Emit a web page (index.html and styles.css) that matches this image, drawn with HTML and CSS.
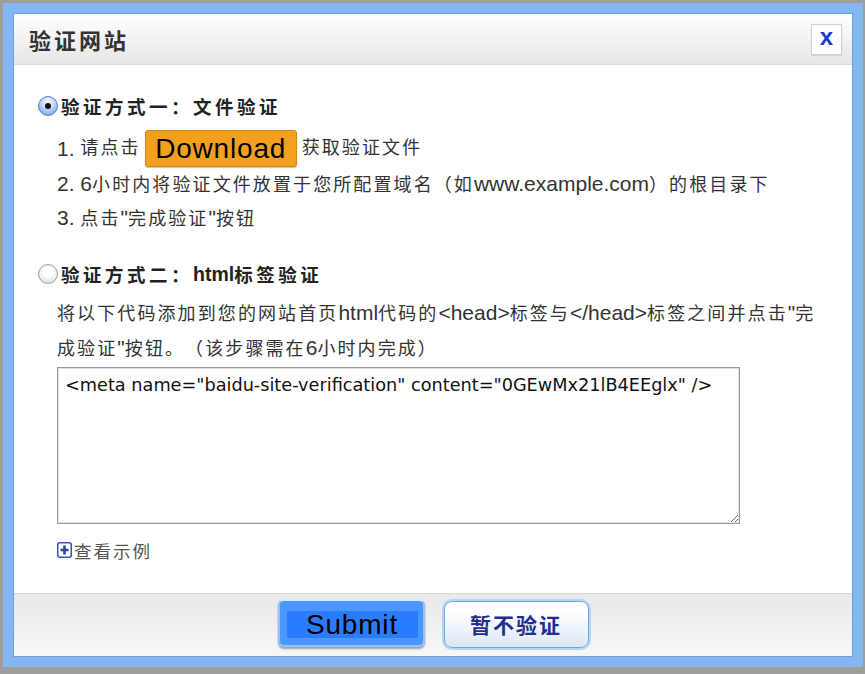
FILE: index.html
```html
<!DOCTYPE html>
<html lang="zh-CN">
<head>
  <meta charset="UTF-8">
  <title>验证网站</title>
  <link rel="stylesheet" href="styles.css">
</head>
<body>
  <div class="frame">
    <div class="dialog">
      <div class="header">
        <h1 class="title">验证网站</h1>
        <a class="close" href="#">x</a>
      </div>

      <div class="content">
        <div class="method"><span class="radio checked"></span>验证方式一：文件验证</div>
        <div class="steps">
          <div class="step first"><span class="en">1.&nbsp;</span>请点击<a class="download" href="#">Download</a>获取验证文件</div>
          <div class="step"><span class="en">2. 6</span>小时内将验证文件放置于您所配置域名（如<span class="en">www.example.com</span>）的根目录下</div>
          <div class="step"><span class="en">3. </span>点击<span class="en">"</span>完成验证<span class="en">"</span>按钮</div>
        </div>

        <div class="method second"><span class="radio"></span>验证方式二：<span class="en">html</span>标签验证</div>
        <p class="desc">将以下代码添加到您的网站首页<span class="en">html</span>代码的<span class="en">&lt;head&gt;</span>标签与<span class="en">&lt;/head&gt;</span>标签之间并点击<span class="en">"</span>完<br>成验证<span class="en">"</span>按钮。（该步骤需在<span class="en">6</span>小时内完成）</p>
        <textarea class="code" spellcheck="false">&lt;meta name="baidu-site-verification" content="0GEwMx21lB4EEglx" /&gt;</textarea>
        <a class="example" href="#">
          <svg width="15" height="16" viewBox="0 0 15 16">
            <rect x="0.75" y="0.75" width="13.5" height="14.5" rx="2" fill="#fff" stroke="#3550c4" stroke-width="1.5"/>
            <path d="M7.5 3.5v9M3.5 8h8" stroke="#2a3fb8" stroke-width="2.6"/>
          </svg>查看示例
        </a>
      </div>

      <div class="footer">
        <button class="btn-submit"><span>Submit</span></button>
        <button class="btn-cancel">暂不验证</button>
      </div>
    </div>
  </div>
</body>
</html>
```

FILE: styles.css
```css
html, body {
  margin: 0;
  padding: 0;
}
body {
  width: 865px;
  height: 674px;
  overflow: hidden;
  background: #9d9d9d;
  font-family: "Liberation Sans", "Noto Sans CJK SC", sans-serif;
  color: #333;
  text-spacing-trim: space-all;
}
.frame {
  margin: 3px 0 0 3px;
  width: 860px;
  height: 664px;
  box-sizing: border-box;
  padding: 10px;
  background: #84b6f0;
}
.dialog {
  height: 100%;
  box-sizing: border-box;
  border: 1px solid #6c9fe0;
  background: #fff;
  display: flex;
  flex-direction: column;
}
.header {
  height: 51px;
  box-sizing: border-box;
  border-bottom: 1px solid #dcdcdc;
  background: linear-gradient(to bottom, #fff, #e6e6e6);
  display: flex;
  align-items: center;
  justify-content: space-between;
  padding: 0 10px 0 15px;
}
.title {
  margin: 0;
  font-size: 22px;
  letter-spacing: 3px;
  color: #333;
  font-weight: bold;
}
.close {
  width: 31px;
  height: 31px;
  box-sizing: border-box;
  border: 1px solid #cfcfcf;
  background: #fff;
  box-shadow: 0 1px 1px rgba(0,0,0,0.08);
  color: #1d3cc6;
  font: bold 24px/24px "Liberation Sans", sans-serif;
  text-align: center;
  text-decoration: none;
  margin-top: 1px;
}
.content {
  flex: 1;
  padding: 31px 0 0 24px;
  font-size: 18px;
  letter-spacing: 2.1px;
}
.en {
  font-size: 21px;
  letter-spacing: 0;
}
.method {
  display: flex;
  align-items: center;
  height: 20px;
  font-weight: bold;
  font-size: 18.5px;
  letter-spacing: 3.5px;
  color: #222;
}
.method .en {
  font-size: 19.5px;
}
.method.second {
  margin-top: 29px;
}
.radio {
  width: 20px;
  height: 20px;
  box-sizing: border-box;
  border-radius: 50%;
  border: 1px solid #9c9c9c;
  background: radial-gradient(circle at 50% 35%, #fff 30%, #d6d6d6 100%);
  margin-right: 3px;
  display: flex;
  align-items: center;
  justify-content: center;
  flex-shrink: 0;
}
.radio.checked {
  border-color: #5a7fbd;
  background: radial-gradient(circle at 50% 30%, #f2f7ff 10%, #a9c9f5 55%, #6a98dc 100%);
}
.radio.checked::after {
  content: "";
  width: 6px;
  height: 6px;
  border-radius: 50%;
  background: #111;
}
.steps {
  margin: 14px 0 0 19px;
}
.step {
  height: 34px;
  line-height: 34px;
}
.step.first {
  height: 37px;
  line-height: 37px;
  display: flex;
  align-items: center;
}
.download {
  display: inline-block;
  width: 152px;
  height: 37px;
  box-sizing: border-box;
  border: 1px solid #d58a12;
  border-radius: 3px;
  background: #f4a01f;
  box-shadow: 0 1px 1px rgba(0,0,0,0.25);
  color: #000;
  font: 28px/35px "Liberation Sans", sans-serif;
  letter-spacing: 0.8px;
  text-align: center;
  text-decoration: none;
  margin: 0 5px 0 4px;
}
.desc {
  margin: 12px 0 0 19px;
  line-height: 34px;
}
.code {
  display: block;
  margin: 1px 0 0 19px;
  width: 683px;
  height: 157px;
  box-sizing: border-box;
  border: 1px solid #9a9a9a;
  box-shadow: inset 0 0 0 1px #e2e2e2;
  padding: 6px 7px;
  font: 17.7px/22px "DejaVu Sans", sans-serif;
  letter-spacing: 0;
  color: #111;
  resize: both;
  outline: none;
}
.example {
  display: flex;
  align-items: center;
  margin: 16px 0 0 19px;
  height: 20px;
  color: #555;
  text-decoration: none;
  font-size: 17.5px;
  letter-spacing: 2px;
}
.example svg {
  margin-right: 2px;
}
.footer {
  height: 63px;
  box-sizing: border-box;
  border-top: 1px solid #d6d6d6;
  background: linear-gradient(to bottom, #e9e9e9, #f7f7f7);
  display: flex;
  justify-content: center;
  align-items: center;
  gap: 19px;
  padding-bottom: 4px;
}
button {
  font-family: "Liberation Sans", "Noto Sans CJK SC", sans-serif;
  cursor: pointer;
  padding: 0;
}
.btn-submit {
  width: 147px;
  height: 48px;
  box-sizing: border-box;
  border: 2px solid #8ec3ff;
  border-top-color: #d6eaff;
  border-radius: 6px;
  background: #4b96ff;
  box-shadow: 0 2px 2px rgba(0,0,0,0.35);
  padding: 10px 5px 7px 7px;
}
.btn-submit span {
  display: block;
  height: 100%;
  background: #2a7cff;
  color: #000;
  font-size: 28px;
  line-height: 27px;
  letter-spacing: 0.8px;
}
.btn-cancel {
  width: 145px;
  height: 47px;
  box-sizing: border-box;
  border: 1px solid #6ea7ea;
  border-radius: 8px;
  box-shadow: 0 0 0 2px #b5d5f7;
  background: linear-gradient(to bottom, #fff 20%, #dbe7f7);
  color: #262c8c;
  font-size: 21px;
  font-weight: bold;
  letter-spacing: 2px;
  margin-top: 2px;
}
```
